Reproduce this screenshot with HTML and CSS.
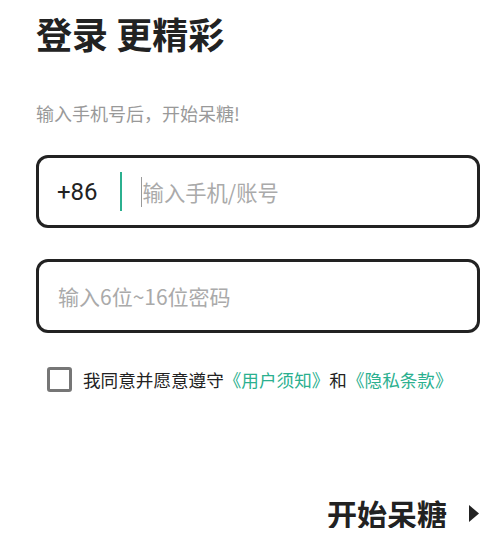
FILE: index.html
```html
<!DOCTYPE html>
<html lang="zh-CN">
<head>
<meta charset="utf-8">
<title>登录</title>
<link rel="stylesheet" href="styles.css">
</head>
<body>
<main class="page">
  <h1 class="title">登录 更精彩</h1>
  <p class="subtitle">输入手机号后，开始呆糖!</p>
  <div class="field field-phone">
    <span class="prefix">+86</span>
    <span class="divider"></span>
    <span class="caret"></span>
    <span class="placeholder">输入手机/账号</span>
  </div>
  <div class="field field-pwd">
    <span class="placeholder">输入6位~16位密码</span>
  </div>
  <div class="agree">
    <span class="checkbox"></span>
    <span class="agree-text">我同意并愿意遵守<span class="link">《用户须知》</span>和<span class="link">《隐私条款》</span></span>
  </div>
  <div class="action">
    <span class="action-text">开始呆糖</span>
    <svg class="arrow" width="12" height="19" viewBox="0 0 12 19"><path d="M1 1 L11 9.5 L1 18 Z" fill="#222"/></svg>
  </div>
</main>
</body>
</html>
```
FILE: styles.css
```css
html, body {
  margin: 0;
  padding: 0;
  background: #fff;
}
body {
  font-family: "Noto Sans CJK SC", "Noto Sans", sans-serif;
  color: #222;
}
.page {
  padding: 0 24px 0 36px;
  display: flex;
  flex-direction: column;
}
.title {
  margin: 15px 0 0;
  font-size: 36px;
  line-height: 36px;
  font-weight: 700;
  color: #222;
}
.subtitle {
  margin: 53px 0 0;
  font-size: 18px;
  line-height: 18px;
  color: #999;
}
.field {
  box-sizing: border-box;
  border: 3px solid #222;
  border-radius: 12px;
  display: flex;
  align-items: center;
}
.field-phone {
  margin-top: 33px;
  height: 73px;
  padding-left: 18px;
}
.field-pwd {
  margin-top: 31px;
  height: 74px;
  padding-left: 19px;
}
.prefix {
  font-family: Roboto, "Noto Sans CJK SC", sans-serif;
  font-size: 24px;
  line-height: 24px;
  color: #222;
}
.divider {
  width: 2px;
  height: 39px;
  background: #2bb08f;
  margin-left: 22px;
}
.caret {
  width: 1px;
  height: 30px;
  background: #9a9a9a;
  margin-left: 19px;
}
.placeholder {
  font-size: 21px;
  line-height: 21px;
  color: #aaa;
}
.field-phone .placeholder {
  margin-left: 1px;
  font-size: 21.3px;
}
.agree {
  margin-top: 34px;
  display: flex;
  align-items: center;
  height: 25px;
}
.checkbox {
  box-sizing: border-box;
  width: 25px;
  height: 25px;
  border: 3px solid #767676;
  border-radius: 3px;
  margin-left: 11px;
}
.agree-text {
  margin-left: 11px;
  font-size: 17.6px;
  line-height: 18px;
  color: #222;
}
.link {
  color: #2bb08f;
}
.action {
  margin-top: 106px;
  display: flex;
  align-items: center;
  justify-content: flex-end;
}
.action-text {
  font-size: 30px;
  line-height: 30px;
  font-weight: 700;
  color: #222;
}
.arrow {
  margin-left: 21px;
  display: block;
}
```
